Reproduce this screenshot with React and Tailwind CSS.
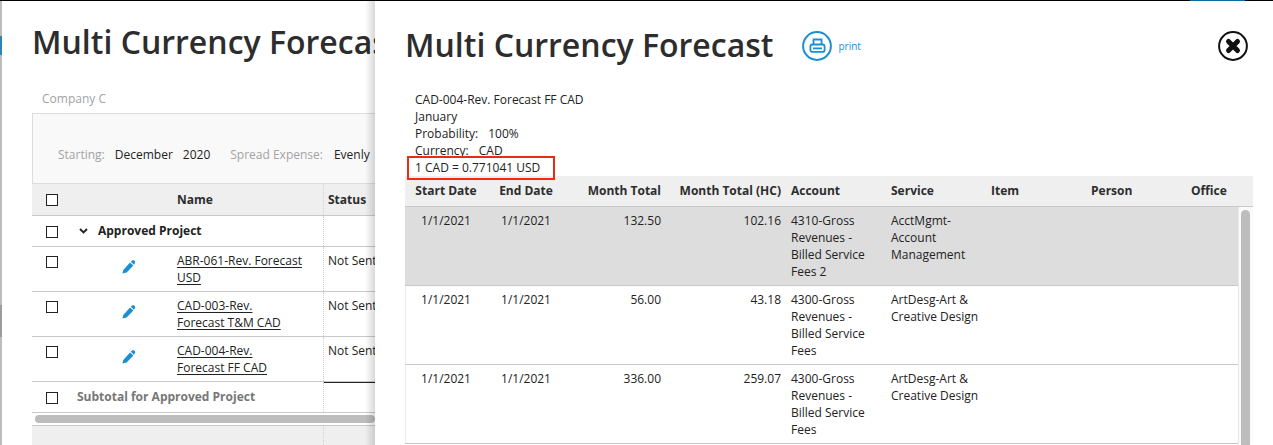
import React from "react";

const sans = "font-['Open_Sans',sans-serif]";

const Box = () => <span className="block shrink-0 w-[12px] h-[12px] border border-[#222] bg-white" />;

const Pencil = () => (
  <svg width="14" height="14" viewBox="0 0 15 15" className="text-[#1b8fd2]">
    <path d="M0.5 14.5 L1.4 10.6 L8.6 2.8 L12.2 6 L5 13.4 Z" fill="currentColor" />
    <path d="M9.4 2 L10.8 0.6 C11.6 0.1 12.6 0.2 13.3 0.8 C14.2 1.6 14.4 2.7 13.8 3.6 L12.9 5.2 Z" fill="currentColor" />
  </svg>
);

const PrintIcon = () => (
  <svg width="30" height="30" viewBox="0 0 30 30" fill="none" stroke="#1b8fd2">
    <circle cx="15" cy="15" r="13.9" strokeWidth="2" />
    <path d="M11.5 13.5 V8.5 H19.5 V13.5" strokeWidth="1.8" />
    <rect x="8.4" y="13.5" width="14.2" height="7.4" rx="2" strokeWidth="1.8" />
    <path d="M11 17.4 H20" strokeWidth="1.8" />
  </svg>
);

const CloseIcon = () => (
  <svg width="30" height="30" viewBox="0 0 30 30" fill="none">
    <circle cx="15" cy="15" r="13.9" stroke="#111" strokeWidth="2" />
    <path d="M10.5 10.5 L19.5 19.5 M19.5 10.5 L10.5 19.5" stroke="#111" strokeWidth="5" strokeLinecap="round" />
  </svg>
);

const Chevron = () => (
  <svg width="9" height="6" viewBox="0 0 9 6" fill="none" className="block">
    <path d="M1 1 L4.5 4.5 L8 1" stroke="#222" strokeWidth="1.9" />
  </svg>
);

const projects = [
  ["ABR-061-Rev. Forecast", "USD"],
  ["CAD-003-Rev.", "Forecast T&M CAD"],
  ["CAD-004-Rev.", "Forecast FF CAD"],
];

const forecastRows = [
  { total: "132.50", hc: "102.16", account: ["4310-Gross", "Revenues -", "Billed Service", "Fees 2"], service: ["AcctMgmt-", "Account", "Management"], active: true },
  { total: "56.00", hc: "43.18", account: ["4300-Gross", "Revenues -", "Billed Service", "Fees"], service: ["ArtDesg-Art &", "Creative Design"] },
  { total: "336.00", hc: "259.07", account: ["4300-Gross", "Revenues -", "Billed Service", "Fees"], service: ["ArtDesg-Art &", "Creative Design"] },
];

const cols = "grid grid-cols-[80px_80px_106px_120px_100px_100px_100px_100px_47px]";
const leftCols = "grid grid-cols-[291px_1fr]";

const Lines = ({ items }) => items.map((t) => <div key={t}>{t}</div>);

const LeftPage = () => (
  <div className="w-[375px] shrink-0 h-full relative flex bg-white overflow-hidden">
    {/* sliver of the page behind */}
    <div className="w-[2px] shrink-0 flex flex-col bg-[#bcbcbc]">
      <div className="h-[35px]" />
      <div className="h-[19px] bg-[#2a86b5]" />
      <div className="h-[250px]" />
      <div className="h-[32px] bg-[#9c9c9c]" />
    </div>
    <div className="flex-1 min-w-0 pl-[30px] flex flex-col">
      <h1 className="mt-[21px] h-[40px] text-[32px] leading-[40px] font-semibold text-[#2d2d2d] whitespace-nowrap">
        Multi Currency Forecast
      </h1>
      <div className="mt-[27px] ml-[10px] h-[20px] leading-[20px] text-[12px] text-[#a3a3a3]">Company C</div>
      <div className="mt-[4px] h-[71px] border-y border-l border-[#dcdcdc] bg-[#f9f9f9] flex items-center gap-[20px] pl-[25px] pt-[12px] text-[12px] whitespace-nowrap">
        <div className="flex gap-[10px]">
          <span className="text-[#a3a3a3]">Starting:</span>
          <span className="text-[#222]">December</span>
          <span className="text-[#222]">2020</span>
        </div>
        <div className="flex gap-[11px]">
          <span className="text-[#a3a3a3]">Spread Expense:</span>
          <span className="text-[#222]">Evenly</span>
        </div>
      </div>

      <div className={leftCols + " h-[32px] shrink-0 bg-[#efefef] border-b border-[#c9c9c9] text-[12px] font-bold text-[#2d2d2d]"}>
        <div className="flex items-center pl-[14px]">
          <span className="mt-[1px]"><Box /></span>
          <span className="ml-[119px]">Name</span>
        </div>
        <div className="flex items-center pl-[4px] border-l border-dotted border-[#d0d0d0]">Status</div>
      </div>

      <div className={leftCols + " h-[31px] shrink-0 border-b border-[#c9c9c9] text-[12px] font-bold text-[#222]"}>
        <div className="flex items-center pl-[14px] whitespace-nowrap">
          <span className="mt-[2px]"><Box /></span>
          <span className="ml-[21px] mr-[10px]"><Chevron /></span>
          Approved Project
        </div>
        <div className="border-l border-dotted border-[#d0d0d0]" />
      </div>

      {projects.map((lines, i) => (
        <div key={lines[0]} className={leftCols + " h-[45px] shrink-0 border-b border-[#c9c9c9] text-[12px] leading-[17px] text-[#222]"}>
          <div className="flex items-start pl-[14px] pt-[9px]">
            <Box />
            <span className="ml-[64px] mr-[41px] mt-[4px] shrink-0"><Pencil /></span>
            <div className="-mt-[4px] whitespace-nowrap underline underline-offset-2">
              <Lines items={lines} />
            </div>
          </div>
          <div className="border-l border-dotted border-[#d0d0d0] pl-[4px] pt-[5px] whitespace-nowrap relative">
            Not Sent
            {i === 2 && <div className="absolute left-0 right-0 bottom-[-2px] h-[1px] bg-[#222]" />}
          </div>
        </div>
      ))}

      <div className={leftCols + " h-[31px] shrink-0 border-b border-[#c9c9c9] text-[12px] font-bold text-[#777]"}>
        <div className="flex items-center pl-[14px] whitespace-nowrap">
          <span className="mt-[2px]"><Box /></span>
          <span className="ml-[19px]">Subtotal for Approved Project</span>
        </div>
        <div className="border-l border-dotted border-[#d0d0d0]" />
      </div>

      <div className="h-[13px] shrink-0 border-b border-[#c9c9c9] pl-[3px] pt-[2px]">
        <div className="h-[8px] rounded-full bg-[#bdbdbd]" />
      </div>
      <div className={leftCols + " flex-1 bg-[#efefef]"}>
        <div />
        <div className="border-l border-dotted border-[#d0d0d0]" />
      </div>
    </div>
    <div className="absolute right-0 top-0 bottom-0 w-[10px] bg-gradient-to-r from-transparent to-black/15" />
  </div>
);

const Panel = () => (
  <div className="flex-1 min-w-0 h-full bg-white pl-[31px] pr-[20px] flex flex-col">
    <div className="h-[60px] mt-[15px] -ml-[1px] shrink-0 flex items-center">
      <h1 className="text-[32px] leading-[40px] font-semibold text-[#2d2d2d] -mt-[2px] whitespace-nowrap">Multi Currency Forecast</h1>
      <span className="ml-[29px]"><PrintIcon /></span>
      <span className="ml-[6px] text-[10px] text-[#1b8fd2]">print</span>
      <span className="ml-auto mr-[5px]"><CloseIcon /></span>
    </div>

    <div className="mt-[15px] pl-[9px] text-[12px] leading-[17px] text-[#222] shrink-0 h-[85px] relative">
      <div>CAD-004-Rev. Forecast FF CAD</div>
      <div>January</div>
      <div>Probability:<span className="ml-[10px]">100%</span></div>
      <div>Currency:<span className="ml-[10px]">CAD</span></div>
      <div>1 CAD = 0.771041 USD</div>
      <div className="absolute left-[1px] top-[65px] w-[148px] h-[24px] border-2 border-[#ef2a12]" />
    </div>

    <div className="flex-1 min-h-0 overflow-hidden -ml-[1px]">
      <div className={cols + " h-[31px] bg-[#efefef] border-b border-[#c9c9c9] text-[12px] font-bold text-[#2d2d2d] items-center whitespace-nowrap"}>
        <div className="text-center pl-[2px]">Start Date</div>
        <div className="text-center pl-[2px]">End Date</div>
        <div className="text-right pr-[10px]">Month Total</div>
        <div className="text-right pr-[10px]">Month Total (HC)</div>
        <div>Account</div>
        <div>Service</div>
        <div>Item</div>
        <div>Person</div>
        <div>Office</div>
      </div>
      <div className="relative">
        {forecastRows.map((r, i) => (
          <div
            key={i}
            className={cols + " h-[79px] border-b border-[#c9c9c9] text-[12px] leading-[17px] text-[#222] pt-[5px] mr-[15px] " + (r.active ? "bg-[#dddddd]" : "shadow-[inset_1px_0_0_#ececec]")}
          >
            <div className="text-center pl-[2px]">1/1/2021</div>
            <div className="text-center pl-[2px]">1/1/2021</div>
            <div className="text-right pr-[10px]">{r.total}</div>
            <div className="text-right pr-[10px]">{r.hc}</div>
            <div><Lines items={r.account} /></div>
            <div className="whitespace-nowrap"><Lines items={r.service} /></div>
          </div>
        ))}
        <div className="absolute right-0 top-0 bottom-0 w-[15px] bg-[#fafafa] border-l border-[#e8e8e8] pl-[2px] pt-[3px]">
          <div className="w-[9px] h-[400px] rounded-full bg-[#bdbdbd]" />
        </div>
      </div>
    </div>
  </div>
);

export default function App() {
  return (
    <div className={sans + " w-[1273px] h-[445px] overflow-hidden flex flex-col bg-white"}>
      <div className="h-[1px] shrink-0 bg-black flex">
        <div className="ml-[1190px] w-[55px] bg-[#0a6b9a]" />
      </div>
      <div className="flex-1 min-h-0 flex">
        <LeftPage />
        <Panel />
      </div>
    </div>
  );
}
